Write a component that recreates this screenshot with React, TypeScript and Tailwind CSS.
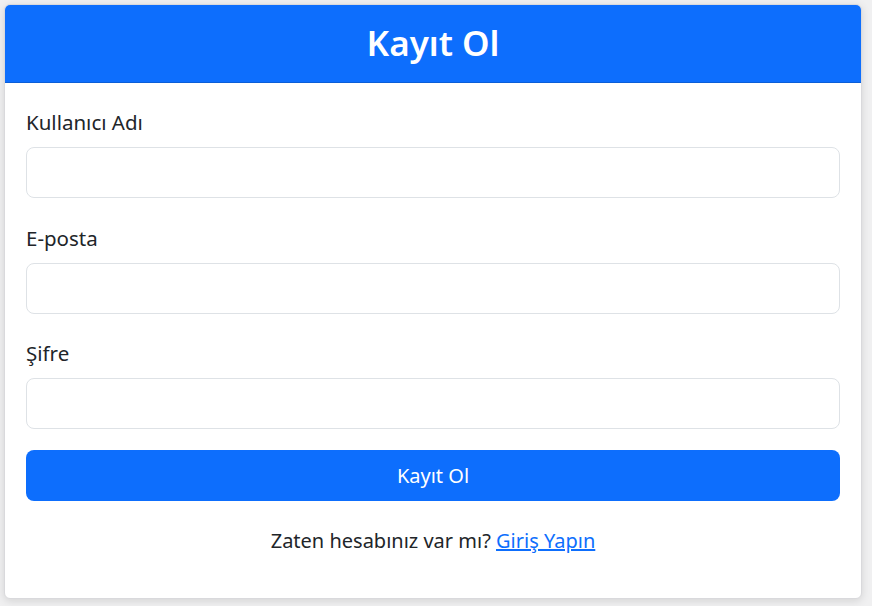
export default function App() {
  const fields = [
    { id: 'username', label: 'Kullanıcı Adı', type: 'text' },
    { id: 'email', label: 'E-posta', type: 'email' },
    { id: 'password', label: 'Şifre', type: 'password' },
  ];

  return (
    <div className="min-h-[606px] bg-[#f0f0f1] pt-[4px] pl-[4px] font-['Noto_Sans',sans-serif] text-[#212529]">
      <div className="w-[858px] rounded-[6px] border border-[#d9d9dc] bg-white shadow-[0_2px_8px_rgba(0,0,0,0.12)] overflow-hidden">
        {/* Header */}
        <div className="h-[78px] flex items-center justify-center bg-[#0d6efd] border-b border-[#0b5ed7]">
          <h1 className="text-[35px] font-semibold text-white leading-none -mt-[2px]">Kayıt Ol</h1>
        </div>

        {/* Body */}
        <form className="px-[21px] pt-[24px] pb-[42px]" onSubmit={(e) => e.preventDefault()}>
          {fields.map((f, i) => (
            <div key={f.id} className={i === 1 ? 'mb-[24px]' : 'mb-[25px]'}>
              <label htmlFor={f.id} className="block text-[20.5px] leading-[30px] mb-[10px]">
                {f.label}
              </label>
              <input
                id={f.id}
                type={f.type}
                className="block w-full h-[51px] rounded-[8px] border border-[#dee2e6] px-4 text-[20px] outline-none"
              />
            </div>
          ))}

          <button
            type="submit"
            className="w-full h-[51px] -mt-[4px] rounded-[8px] bg-[#0d6efd] text-white text-[20px]"
          >
            Kayıt Ol
          </button>

          <p className="mt-[25px] text-center text-[20px] leading-[30px]">
            Zaten hesabınız var mı?{' '}
            <a href="#" className="text-[#0d6efd] underline">
              Giriş Yapın
            </a>
          </p>
        </form>
      </div>
    </div>
  );
}
